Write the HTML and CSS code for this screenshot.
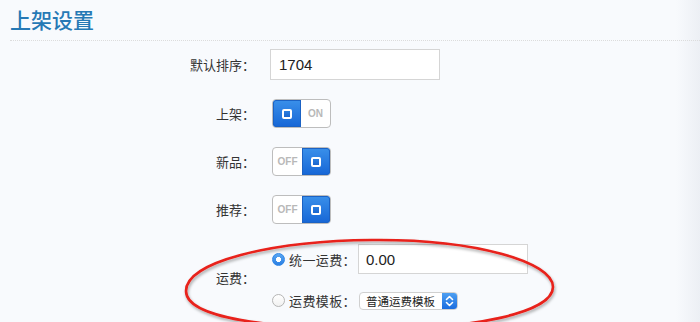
FILE: index.html
```html
<!DOCTYPE html>
<html lang="zh">
<head>
  <meta charset="UTF-8">
  <title>上架设置</title>
  <link rel="stylesheet" href="styles.css">
</head>
<body>
  <div class="page">
    <h1 class="title">上架设置</h1>

    <div class="form">
      <div class="form-row">
        <label class="label">默认排序：</label>
        <input class="text-input" type="text" value="1704">
      </div>

      <div class="form-row">
        <label class="label">上架：</label>
        <div class="switch">
          <span class="switch-on"><i class="knob"></i></span>
          <span class="switch-text">ON</span>
        </div>
      </div>

      <div class="form-row">
        <label class="label">新品：</label>
        <div class="switch">
          <span class="switch-text">OFF</span>
          <span class="switch-on right"><i class="knob"></i></span>
        </div>
      </div>

      <div class="form-row">
        <label class="label">推荐：</label>
        <div class="switch">
          <span class="switch-text">OFF</span>
          <span class="switch-on right"><i class="knob"></i></span>
        </div>
      </div>

      <!-- 运费 -->
      <div class="form-row freight">
        <label class="label">运费：</label>
        <div class="freight-options">
          <div class="option">
            <span class="radio checked"></span>
            <span class="option-name">统一运费：</span>
            <input class="text-input small" type="text" value="0.00">
          </div>
          <div class="option">
            <span class="radio"></span>
            <span class="option-name">运费模板：</span>
            <div class="select">
              <span class="select-value">普通运费模板</span>
              <span class="select-arrow">
                <svg width="9" height="12" viewBox="0 0 9 12">
                  <path d="M1.5 4.5 L4.5 1.5 L7.5 4.5 M1.5 7.5 L4.5 10.5 L7.5 7.5" fill="none" stroke="#fff" stroke-width="1.6" stroke-linecap="round" stroke-linejoin="round"/>
                </svg>
              </span>
            </div>
          </div>
        </div>
      </div>
    </div>

    <svg class="mark" width="700" height="322" viewBox="0 0 700 322">
      <defs>
        <filter id="shade" x="-10%" y="-10%" width="120%" height="130%">
          <feDropShadow dx="1" dy="2" stdDeviation="1.4" flood-color="#000" flood-opacity="0.35"/>
        </filter>
      </defs>
      <path d="M186 291 C186 262 270 241 372 240 C475 239 553 262 553 287 C553 313 470 330 370 329 C268 328 186 318 186 291 Z"
            fill="none" stroke="#e8201a" stroke-width="2.6" filter="url(#shade)"/>
    </svg>
  </div>
</body>
</html>
```

FILE: styles.css
```css
body {
  margin: 0;
  background-color: #f8fafd;
  font-family: "Noto Sans CJK SC", "Liberation Sans", sans-serif;
  color: #333;
  overflow: hidden;
}
.page {
  position: relative;
  height: 322px;
  padding: 0 0 0 10px;
  background: linear-gradient(to right, #f8fafd 0, #f8fafd 676px, #eceff4 700px);
}
.title {
  margin: 0;
  height: 40px;
  line-height: 38px;
  font-size: 21px;
  font-weight: 500;
  color: #2679b5;
  border-bottom: 1px dotted #dcdcdc;
}
.form {
  display: flex;
  flex-direction: column;
  gap: 19px;
  padding-top: 8px;
}
.form-row {
  display: flex;
  align-items: center;
}
.label {
  width: 245px;
  text-align: right;
  font-size: 13px;
  margin-right: 15px;
  color: #333;
}
.text-input {
  width: 170px;
  height: 31px;
  box-sizing: border-box;
  border: 1px solid #d5d5d5;
  background: #fff;
  padding: 0 8px;
  font-family: "Liberation Sans", sans-serif;
  font-size: 15px;
  color: #222;
  outline: none;
}
.text-input.small {
  height: 30px;
  padding-left: 7px;
  margin-left: 2px;
}

/* switch */
.switch {
  display: flex;
  width: 59px;
  height: 29px;
  box-sizing: border-box;
  margin-left: 2px;
  border: 1px solid #bdbdbd;
  border-radius: 4px;
  background: #fff;
  overflow: hidden;
}
.switch-on {
  width: 28px;
  display: flex;
  align-items: center;
  justify-content: center;
  background: linear-gradient(#3a90ea, #1666d6);
  box-shadow: inset 0 0 0 1px #1b62c4;
  border-radius: 3px 0 0 3px;
}
.switch-on.right {
  border-radius: 0 3px 3px 0;
}
.knob {
  width: 10px;
  height: 10px;
  box-sizing: border-box;
  border: 2px solid #fff;
  border-radius: 2px;
  background: linear-gradient(#2a7ee0, #1a66cf);
}
.switch-text {
  flex: 1;
  display: flex;
  align-items: center;
  justify-content: center;
  font-family: "Liberation Sans", sans-serif;
  font-size: 10px;
  font-weight: bold;
  color: #b8b8b8;
}

/* freight */
.freight {
  margin-top: 1px;
}
.freight-options {
  display: flex;
  flex-direction: column;
  gap: 17px;
}
.option {
  display: flex;
  align-items: center;
}
.radio {
  width: 13px;
  height: 13px;
  margin-left: 2px;
  margin-right: 4px;
  box-sizing: border-box;
  border: 1px solid #b5b5b5;
  border-radius: 50%;
  background: linear-gradient(#fff, #f1f1f1);
}
.radio.checked {
  border-color: #2f86e6;
  background: radial-gradient(circle, #fff 0, #fff 2.3px, transparent 2.8px), linear-gradient(#5aa6f2, #2a7fe3);
}
.option-name {
  font-size: 13px;
  letter-spacing: 0.4px;
  color: #333;
}
.select {
  display: flex;
  align-items: center;
  width: 99px;
  height: 18px;
  margin-left: 3px;
  box-sizing: border-box;
  border: 1px solid #d0d0d0;
  border-radius: 4px;
  background: #fff;
  overflow: hidden;
}
.select-value {
  flex: 1;
  padding-left: 6px;
  font-size: 11.5px;
  color: #222;
}
.select-arrow {
  width: 15px;
  height: 100%;
  display: flex;
  align-items: center;
  justify-content: center;
  background: linear-gradient(#4d9ff2, #1b6ddf);
}

.mark {
  position: absolute;
  left: 0;
  top: 0;
  pointer-events: none;
}
```
